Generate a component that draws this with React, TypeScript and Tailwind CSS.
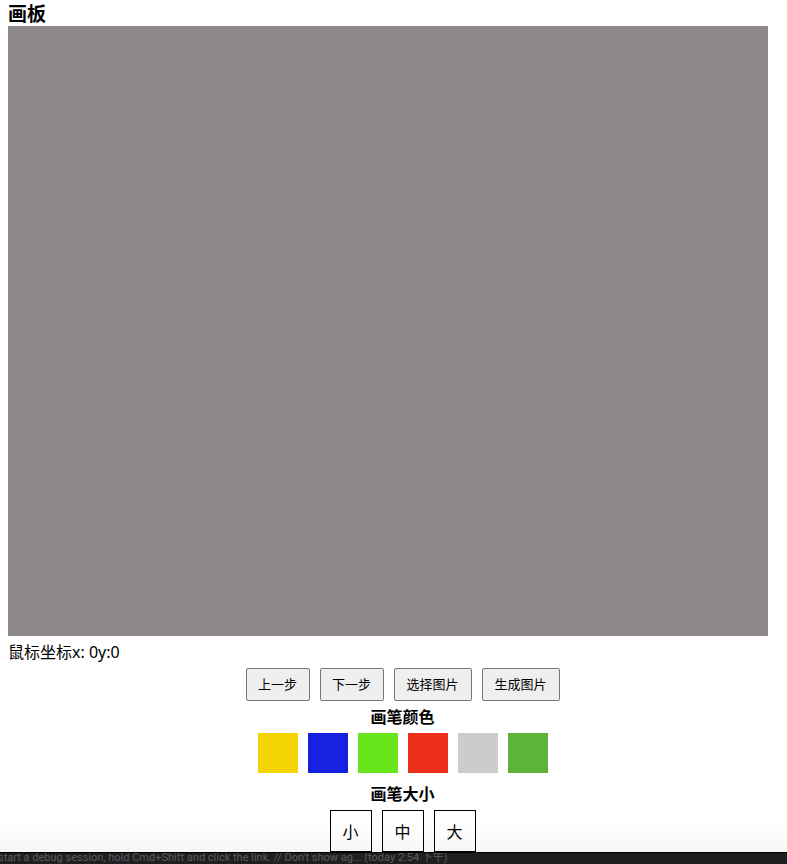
import { useState } from "react";

const colors = [
  { name: "黄色", className: "bg-[#f3d506]" },
  { name: "蓝色", className: "bg-[#1523e0]" },
  { name: "亮绿", className: "bg-[#69e61b]" },
  { name: "红色", className: "bg-[#ec2f19]" },
  { name: "灰色", className: "bg-[#cccccc]" },
  { name: "绿色", className: "bg-[#5cb53a]" },
];

const actions = [
  { label: "上一步", width: "w-16" },
  { label: "下一步", width: "w-16" },
  { label: "选择图片", width: "w-[78px]" },
  { label: "生成图片", width: "w-[78px]" },
];
const sizes = ["小", "中", "大"];

export default function App() {
  const [point, setPoint] = useState({ x: 0, y: 0 });

  return (
    <div className="flex min-h-screen flex-col overflow-x-hidden bg-white font-['Noto_Sans','Noto_Sans_CJK_SC',sans-serif] text-base leading-6 text-black">
      <main className="flex grow flex-col bg-[linear-gradient(to_top,#f6f6f6,#ffffff_28px)]">
        <div className="pl-2 pr-[19px]">
          <h1 className="h-[26px] text-[19px] leading-7 font-bold">画板</h1>
          <canvas
            className="block h-[610px] w-full bg-[#8e8988]"
            onMouseMove={(e) => setPoint({ x: e.nativeEvent.offsetX, y: e.nativeEvent.offsetY })}
          />
          <p className="pt-1">
            鼠标坐标x: {point.x}y:{point.y}
          </p>
        </div>
        <div className="flex flex-col items-center pt-1 pl-[18px]">
          <div className="flex gap-[10px]">
            {actions.map((a) => (
              <button
                key={a.label}
                className={`h-[33px] rounded-[2px] border border-[#767676] bg-[#efefef] pb-[2px] text-[13px] leading-5 whitespace-nowrap ${a.width}`}
              >
                {a.label}
              </button>
            ))}
          </div>
          <h2 className="pt-1 font-bold">画笔颜色</h2>
          <div className="flex gap-[10px] pt-1">
            {colors.map((c) => (
              <button key={c.name} aria-label={c.name} className={`size-10 ${c.className}`} />
            ))}
          </div>
          <h2 className="pt-[9px] font-bold">画笔大小</h2>
          <div className="flex gap-[10px] pt-1">
            {sizes.map((s) => (
              <button key={s} className="size-[42px] border border-black pt-[2px]">
                {s}
              </button>
            ))}
          </div>
        </div>
      </main>
      <footer className="h-3 overflow-hidden border-t border-black bg-[#1e1f21] font-['Roboto','Noto_Sans_CJK_SC',sans-serif] text-[11px] leading-[10px] text-[#5c5c5c]">
        <p className="-ml-[2px] whitespace-nowrap">
          start a debug session, hold Cmd+Shift and click the link. // Don't show ag... (today 2:54 下午)
        </p>
      </footer>
    </div>
  );
}
